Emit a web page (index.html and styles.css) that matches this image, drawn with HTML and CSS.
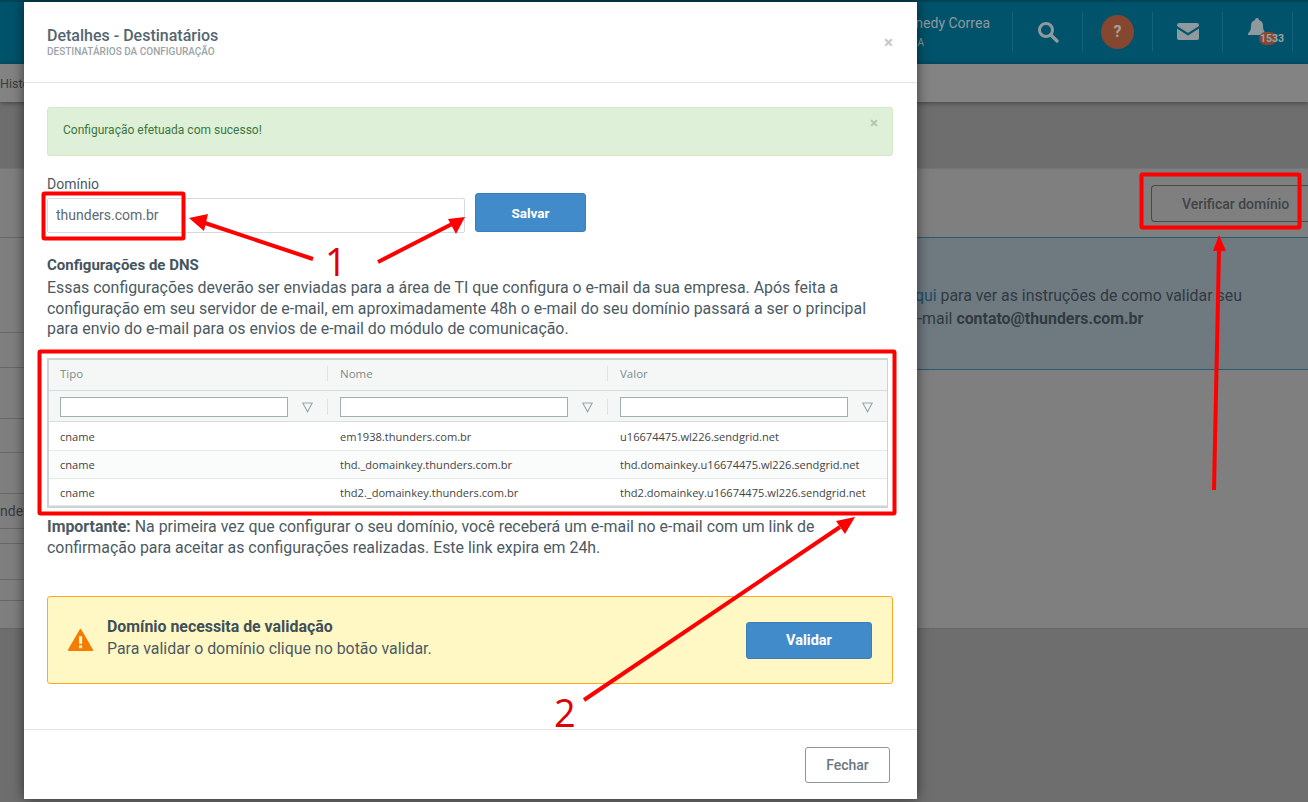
FILE: index.html
```html
<!DOCTYPE html>
<html lang="pt-BR">
<head>
    <meta charset="UTF-8">
    <title>Detalhes - Destinatários</title>
    <link rel="stylesheet" href="styles.css">
</head>
<body>
    <div class="page">
        <header class="topbar">
            <div class="user">
                <div class="user-name"><span>Kennedy Correa</span></div>
                <div class="user-org"><span>THUNDERS MIDIA</span></div>
            </div>
            <div class="top-item">
                <svg width="22" height="22" viewBox="0 0 22 22"><circle cx="9" cy="9" r="6.5" fill="none" stroke="#8f9a9e" stroke-width="3"/><path d="M14 14l6 6" stroke="#8f9a9e" stroke-width="3.4" stroke-linecap="round"/></svg>
            </div>
            <div class="top-item top-help"><span class="help-circle">?</span></div>
            <div class="top-item">
                <svg width="22" height="17" viewBox="0 0 22 17"><path d="M2 0h18a2 2 0 0 1 2 2v1l-11 7L0 3V2a2 2 0 0 1 2-2z" fill="#8f9a9e"/><path d="M0 5.500l11 7 11-7V15a2 2 0 0 1-2 2H2a2 2 0 0 1-2-2z" fill="#8f9a9e"/></svg>
            </div>
            <div class="top-item top-bell">
                <svg width="18" height="21" viewBox="0 0 18 21"><path d="M9 0a2 2 0 0 1 2 2c3 .8 4 3.400 4 6 0 4 1 5.500 3 7.500V17H0v-1.500C2 13.500 3 12 3 8c0-2.600 1-5.200 4-6a2 2 0 0 1 2-2z" fill="#8f9a9e"/></svg>
                <span class="bell-dot"></span>
                <span class="bell-count">1533</span>
            </div>
            <div class="top-end"></div>
        </header>
        <nav class="subnav"><span class="subnav-link">Histórico</span></nav>
        <main class="content">
            <section class="card">
                <div class="card-head">
                    <button class="btn-check">Verificar domínio</button>
                </div>
                <div class="card-body">
                    <div class="side-rows">
                        <div class="side-row"></div>
                        <div class="side-row"></div>
                        <div class="side-row"></div>
                        <div class="side-row"></div>
                        <div class="side-row"></div>
                        <div class="side-row side-row-text">nders.com.br</div>
                        <div class="side-row"></div>
                        <div class="side-row"></div>
                        <div class="side-row"></div>
                        <div class="side-row"></div>
                    </div>
                    <div class="info-panel">
                        <p>Clique <a href="#">aqui</a> para ver as instruções de como validar seu</p>
                        <p>do seu e-mail <b>contato@thunders.com.br</b></p>
                    </div>
                </div>
            </section>
        </main>
    </div>

    <div class="modal">
        <div class="modal-header">
            <div>
                <h4 class="modal-title">Detalhes - Destinatários</h4>
                <div class="modal-sub">DESTINATÁRIOS DA CONFIGURAÇÃO</div>
            </div>
            <span class="modal-close">×</span>
        </div>
        <div class="modal-body">
            <div class="alert-ok">
                <span>Configuração efetuada com sucesso!</span>
                <span class="alert-close">×</span>
            </div>
            <div class="domain-form">
                <div class="domain-field">
                    <label class="domain-label">Domínio</label>
                    <input class="domain-input" type="text" value="thunders.com.br">
                </div>
                <button class="btn-blue btn-save">Salvar</button>
            </div>
            <h5 class="dns-title">Configurações de DNS</h5>
            <p class="dns-text">Essas configurações deverão ser enviadas para a área de TI que configura o e-mail da sua empresa. Após feita a<br>configuração em seu servidor de e-mail, em aproximadamente 48h o e-mail do seu domínio passará a ser o principal<br>para envio do e-mail para os envios de e-mail do módulo de comunicação.</p>
            <div class="grid">
                <div class="grid-row grid-head">
                    <div class="cell">Tipo</div>
                    <div class="cell">Nome</div>
                    <div class="cell">Valor</div>
                </div>
                <div class="grid-row grid-filter">
                    <div class="cell"><input type="text"><svg class="funnel" width="11" height="11" viewBox="0 0 11 11"><path d="M.8 1h9.400L5.500 9.800z" fill="none" stroke="#9aa8a8" stroke-width="1.100"/></svg></div>
                    <div class="cell"><input type="text"><svg class="funnel" width="11" height="11" viewBox="0 0 11 11"><path d="M.8 1h9.400L5.500 9.800z" fill="none" stroke="#9aa8a8" stroke-width="1.100"/></svg></div>
                    <div class="cell"><input type="text"><svg class="funnel" width="11" height="11" viewBox="0 0 11 11"><path d="M.8 1h9.400L5.500 9.800z" fill="none" stroke="#9aa8a8" stroke-width="1.100"/></svg></div>
                </div>
                <div class="grid-row grid-data">
                    <div class="cell">cname</div>
                    <div class="cell">em1938.thunders.com.br</div>
                    <div class="cell">u16674475.wl226.sendgrid.net</div>
                </div>
                <div class="grid-row grid-data grid-alt">
                    <div class="cell">cname</div>
                    <div class="cell">thd._domainkey.thunders.com.br</div>
                    <div class="cell">thd.domainkey.u16674475.wl226.sendgrid.net</div>
                </div>
                <div class="grid-row grid-data">
                    <div class="cell">cname</div>
                    <div class="cell">thd2._domainkey.thunders.com.br</div>
                    <div class="cell">thd2.domainkey.u16674475.wl226.sendgrid.net</div>
                </div>
            </div>
            <p class="dns-note"><b>Importante:</b> Na primeira vez que configurar o seu domínio, você receberá um e-mail no e-mail com um link de<br>confirmação para aceitar as configurações realizadas. Este link expira em 24h.</p>
            <div class="warn-box">
                <svg class="warn-icon" width="25" height="24" viewBox="0 0 26 24"><path d="M13 1.500L25 22.500H1z" fill="#f57c00" stroke="#f57c00" stroke-width="2" stroke-linejoin="round"/><rect x="11.500" y="8" width="3.200" height="8" fill="#fff6d0"/><rect x="11.500" y="17.500" width="3.200" height="3" fill="#fff6d0"/></svg>
                <div class="warn-text">
                    <div class="warn-title">Domínio necessita de validação</div>
                    <div class="warn-desc">Para validar o domínio clique no botão validar.</div>
                </div>
                <button class="btn-blue btn-validate">Validar</button>
            </div>
        </div>
        <div class="modal-footer">
            <button class="btn-close">Fechar</button>
        </div>
    </div>

    <!-- marcações vermelhas por cima do print -->
    <svg class="marks" width="1308" height="802" viewBox="0 0 1308 802">
        <g fill="none" stroke="#f00" stroke-width="4">
            <rect x="43.500" y="193.500" width="140" height="45" rx="1"/>
            <rect x="1141.500" y="174.500" width="158" height="53" rx="1"/>
            <rect x="39.500" y="351.500" width="855" height="162" rx="1"/>
        </g>
        <g stroke="#f00" stroke-width="4" fill="#f00">
            <path d="M313 259L205 223"/><path d="M189 218l19-4-4 17z" stroke="none"/>
            <path d="M378 262L452 224"/><path d="M465 217l-9 17-8-15z" stroke="none"/>
            <path d="M1214 490L1219 250"/><path d="M1219 235l7 16h-13z" stroke="none"/>
            <path d="M584 700L840 527"/><path d="M855 517l-10 17-9-13z" stroke="none"/>
        </g>
        <text class="mark-num" x="325" y="276">1</text>
        <text class="mark-num" x="554" y="727">2</text>
    </svg>
</body>
</html>
```

FILE: styles.css
```css
* {
    box-sizing: border-box;
}
html, body {
    margin: 0;
    height: 802px;
    overflow: hidden;
}
body {
    font-family: Roboto, Arial, sans-serif;
    background-color: #6e6e6e;
    color: #3f4b55;
}

/* fundo escurecido */
.page {
    height: 802px;
    display: flex;
    flex-direction: column;
    background-color: #6e6e6e;
}
.topbar {
    height: 64px;
    flex: none;
    background-color: #00536b;
    display: flex;
    justify-content: flex-end;
    align-items: center;
    padding-bottom: 3px;
    border-top: 2px solid #004357;
}
.user {
    width: 91px;
    margin: 5px 22px 0 0;
    color: #8f9a9e;
    font-size: 14px;
    white-space: nowrap;
    overflow: hidden;
}
.user-name {
    display: flex;
    justify-content: flex-end;
    line-height: 18px;
}
.user-org {
    display: flex;
    justify-content: flex-end;
    padding-right: 66px;
    font-size: 10px;
    line-height: 22px;
}
.user-name span, .user-org span {
    flex: none;
}
.top-item {
    width: 70px;
    height: 39px;
    border-left: 1px solid #0e657d;
    display: flex;
    align-items: center;
    justify-content: center;
    position: relative;
    flex: none;
}
.top-end {
    width: 16px;
    height: 39px;
    border-left: 1px solid #0e657d;
    flex: none;
}
.help-circle {
    width: 33px;
    height: 34px;
    border-radius: 50%;
    background-color: #85472f;
    color: #a8a09c;
    font-weight: 700;
    font-size: 16px;
    display: flex;
    align-items: center;
    justify-content: center;
}
.top-bell svg {
    margin-right: 2px;
    margin-top: -6px;
}
.bell-dot {
    position: absolute;
    left: 36px;
    top: 20px;
    width: 18px;
    height: 13px;
    border-radius: 7px;
    background-color: #85472f;
}
.bell-count {
    position: absolute;
    left: 37px;
    top: 20px;
    font-size: 10.500px;
    line-height: 13px;
    font-weight: 700;
    color: #9aa3a6;
}
.subnav {
    height: 38px;
    flex: none;
    background-color: #838383;
    box-shadow: 0 1px 5px rgba(0, 0, 0, .4);
    display: flex;
    align-items: center;
    font-size: 12.500px;
    color: #3c3c3c;
}
.content {
    flex: 1;
    padding-top: 66px;
}
.card {
    height: 461px;
    background-color: #7f7f7f;
    border-top: 1px solid #757575;
    border-bottom: 1px solid #666;
    display: flex;
    flex-direction: column;
}
.card-head {
    height: 68px;
    flex: none;
    display: flex;
    justify-content: flex-end;
    padding-top: 16px;
}
.btn-check {
    width: 157px;
    height: 37px;
    padding: 0 0 0 30px;
    font-family: inherit;
    font-size: 14px;
    font-weight: 500;
    text-align: left;
    color: #3f4448;
    background: transparent;
    border: 1px solid #4a4a4a;
    border-right: none;
    border-radius: 4px 0 0 4px;
}
.card-body {
    flex: 1;
    display: flex;
    align-items: flex-start;
}
.side-rows {
    width: 600px;
    flex: none;
    display: grid;
    grid-template-rows: 95px 35px 51px 34px 41px 35px 15px 36px 21px 27px;
}
.side-row {
    border-top: 1px solid #686868;
    font-size: 14px;
    line-height: 35px;
    color: #3a3a3a;
    white-space: nowrap;
}
.info-panel {
    flex: 1;
    height: 133px;
    background-color: #6f7980;
    border-top: 1px solid #285a70;
    border-bottom: 1px solid #285a70;
    padding: 46px 0 0 258px;
    font-size: 15.900px;
    line-height: 23px;
    color: #2f3a42;
}
.info-panel p {
    margin: 0;
    white-space: nowrap;
}
.info-panel a {
    color: #1e4d68;
    text-decoration: none;
}

/* modal */
.modal {
    position: absolute;
    left: 24px;
    top: 2px;
    width: 893px;
    height: 797px;
    background-color: #fff;
    box-shadow: 0 0 12px rgba(0, 0, 0, .55);
    display: flex;
    flex-direction: column;
}
.modal-header {
    height: 81px;
    flex: none;
    border-bottom: 1px solid #e5e5e5;
    padding: 25px 24px 0 23px;
    display: flex;
    justify-content: space-between;
}
.modal-title {
    margin: 0;
    font-size: 16px;
    font-weight: 500;
    line-height: 18px;
    color: #546570;
}
.modal-sub {
    font-size: 10px;
    font-weight: 500;
    line-height: 14px;
    color: #9ba4aa;
}
.modal-close {
    color: #c4c8cb;
    font-size: 17px;
    line-height: 20px;
    margin-top: 5px;
    font-weight: 700;
}
.modal-body {
    flex: 1;
    padding: 24px 24px 0 23px;
}
.alert-ok {
    height: 49px;
    background-color: #dff0d8;
    border: 1px solid #d6e9c6;
    border-radius: 3px;
    padding: 15px;
    font-size: 12px;
    line-height: 15px;
    color: #3c763d;
    display: flex;
    justify-content: space-between;
}
.alert-close {
    color: #b5c5ae;
    font-size: 15px;
    font-weight: 700;
    line-height: 14px;
    margin: -7px -1px 0 0;
}
.domain-form {
    display: flex;
    align-items: flex-end;
    gap: 10px;
    margin-top: 19px;
}
.domain-field {
    width: 418px;
}
.domain-label {
    display: block;
    font-size: 14px;
    line-height: 18px;
    color: #4c5a63;
    margin-bottom: 5px;
}
.domain-input {
    display: block;
    width: 100%;
    height: 35px;
    border: 1px solid #d5dade;
    border-radius: 2px;
    padding: 0 8px 2px;
    font-family: inherit;
    font-size: 14px;
    color: #5d6a73;
}
.btn-blue {
    font-family: inherit;
    font-weight: 700;
    color: #fff;
    background-color: #428bca;
    border: 1px solid #3b7fb9;
    border-radius: 3px;
}
.btn-save {
    width: 111px;
    height: 39px;
    margin-bottom: 1px;
    font-size: 13.500px;
}
.dns-title {
    margin: 23px 0 0;
    font-size: 15px;
    font-weight: 700;
    line-height: 18px;
    color: #46545e;
}
.dns-text, .dns-note {
    margin: 4px 0 0;
    font-size: 15.900px;
    line-height: 20.500px;
    color: #4c5a63;
    white-space: nowrap;
}
.grid {
    margin-top: 18.500px;
    width: 841px;
    height: 150px;
    border: 2px solid #ccd3d3;
    border-right-width: 1px;
    font-family: "Open Sans", Arial, sans-serif;
    font-size: 11.100px;
    color: #444;
}
.grid-row {
    display: grid;
    grid-template-columns: 278px 280px 1fr;
}
.grid-head {
    height: 31px;
    padding-bottom: 3px;
    background-color: #f5f7f6;
    color: #7f8a8c;
    align-items: center;
    border-bottom: 1px solid #d8dede;
    font-size: 11.500px;
}
.cell {
    padding-left: 13px;
}
.cell:first-child {
    padding-left: 11px;
}
.grid-head .cell + .cell,
.grid-filter .cell + .cell {
    background: linear-gradient(#dfe3e3, #dfe3e3) left center / 1px 16px no-repeat;
}
.grid-filter {
    height: 31px;
    padding-top: 2px;
    background-color: #f5f7f6;
    border-bottom: 1px solid #d8dede;
    align-items: center;
}
.grid-filter .cell {
    display: flex;
    align-items: center;
    gap: 14px;
}
.grid-filter input {
    width: 228px;
    height: 20px;
    border: 1px solid #9fb0b0;
    background-color: #fff;
    padding: 0;
}
.grid-data {
    height: 28px;
    align-items: center;
    border-bottom: 1px solid #e6e9e9;
}
.grid-filter + .grid-data {
    height: 29px;
}
.grid-data:last-child {
    height: 27px;
}
.grid-alt {
    background-color: #fafbfb;
}
.dns-note {
    margin-top: 9px;
}
.warn-box {
    margin-top: 38px;
    height: 88px;
    background-color: #fff8c4;
    border: 1px solid #ffa726;
    border-radius: 3px;
    display: flex;
    align-items: center;
    padding: 0 20px;
}
.warn-icon {
    flex: none;
}
.warn-text {
    flex: 1;
    margin-left: 14px;
    padding-bottom: 4px;
    line-height: 22px;
}
.warn-title {
    font-size: 15.900px;
    font-weight: 700;
    color: #3f4f59;
}
.warn-desc {
    font-size: 15.900px;
    color: #4c5a63;
}
.btn-validate {
    width: 126px;
    height: 37px;
    font-size: 14.500px;
}
.modal-footer {
    height: 70px;
    flex: none;
    border-top: 1px solid #e5e5e5;
    display: flex;
    justify-content: flex-end;
    align-items: flex-start;
    padding: 17px 27px 0 0;
}
.btn-close {
    width: 85px;
    height: 36px;
    font-family: inherit;
    font-size: 14px;
    font-weight: 500;
    color: #6c7780;
    background-color: #fff;
    border: 1px solid #8c959c;
    border-radius: 3px;
}

/* setas e numeros do print */
.marks {
    position: absolute;
    left: 0;
    top: 0;
}
.mark-num {
    font-family: "Open Sans", Arial, sans-serif;
    font-size: 38px;
    fill: #e00000;
}
```
